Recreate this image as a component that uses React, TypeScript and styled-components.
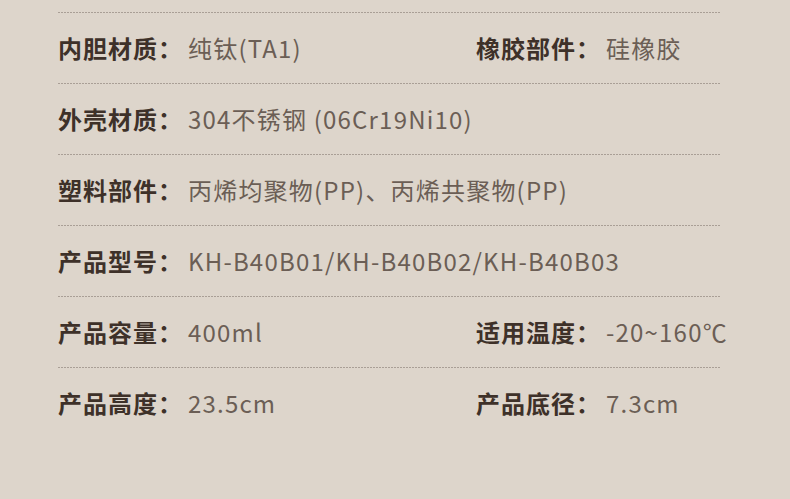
import styled, { createGlobalStyle } from 'styled-components';

const GlobalStyle = createGlobalStyle`
  html, body {
    margin: 0;
    padding: 0;
    background: #ddd5cb;
  }
  body {
    font-family: "Noto Sans CJK SC", "Noto Sans", sans-serif;
  }
`;

const StyledPage = styled.div`
  width: 790px;
  height: 499px;
  background: #ddd5cb;
  padding: 12px 70px 0 58px;
  box-sizing: border-box;
  overflow: hidden;
`;

const StyledRow = styled.div`
  display: grid;
  grid-template-columns: 418px 1fr;
  height: 71px;
  background-image: repeating-linear-gradient(
    to right,
    #a99f96 0,
    #a99f96 2px,
    transparent 2px,
    transparent 3px
  );
  background-size: 100% 1px;
  background-repeat: no-repeat;
  background-position: top left;
`;

const StyledItem = styled.div`
  display: flex;
  align-items: center;
  height: 71px;
  white-space: nowrap;
`;

const StyledLabel = styled.span`
  width: 130px;
  flex-shrink: 0;
  font-size: 24px;
  font-weight: 700;
  letter-spacing: 1px;
  color: #3e3129;
`;

const StyledValue = styled.span`
  font-size: 24px;
  letter-spacing: 1.2px;
  color: #6b5e55;
`;

type Spec = { label: string; value: string };

const rows: Spec[][] = [
  [
    { label: '内胆材质：', value: '纯钛(TA1)' },
    { label: '橡胶部件：', value: '硅橡胶' },
  ],
  [{ label: '外壳材质：', value: '304不锈钢 (06Cr19Ni10)' }],
  [{ label: '塑料部件：', value: '丙烯均聚物(PP)、丙烯共聚物(PP)' }],
  [{ label: '产品型号：', value: 'KH-B40B01/KH-B40B02/KH-B40B03' }],
  [
    { label: '产品容量：', value: '400ml' },
    { label: '适用温度：', value: '-20~160℃' },
  ],
  [
    { label: '产品高度：', value: '23.5cm' },
    { label: '产品底径：', value: '7.3cm' },
  ],
];

const App = () => {
  return (
    <>
      <GlobalStyle />
      <StyledPage>
        {rows.map((row, i) => (
          <StyledRow key={i}>
            {row.map((item) => (
              <StyledItem key={item.label}>
                <StyledLabel>{item.label}</StyledLabel>
                <StyledValue>{item.value}</StyledValue>
              </StyledItem>
            ))}
          </StyledRow>
        ))}
      </StyledPage>
    </>
  );
};

export default App;
